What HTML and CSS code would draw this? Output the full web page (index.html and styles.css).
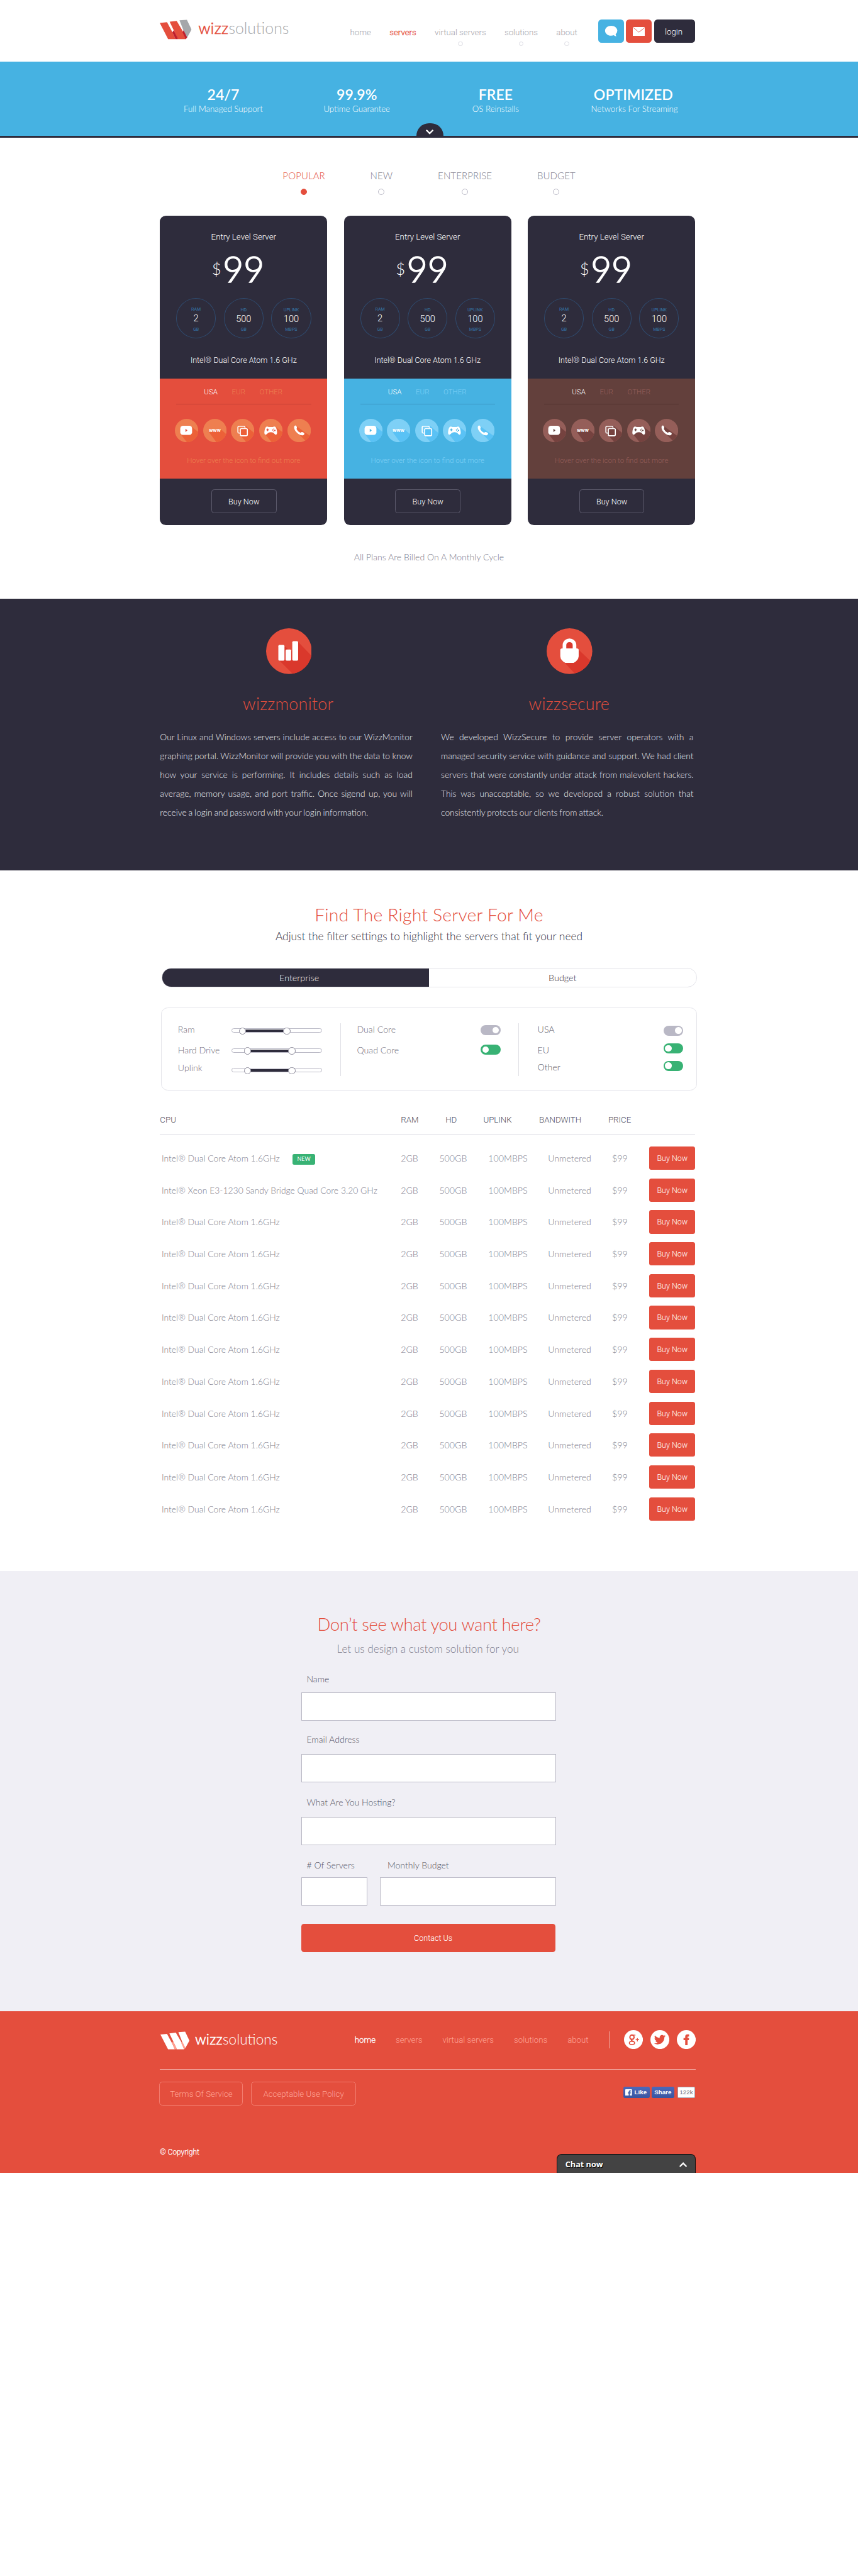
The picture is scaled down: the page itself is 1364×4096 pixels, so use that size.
FILE: index.html
```html
<!DOCTYPE html>
<html lang="en">
<head>
<meta charset="utf-8">
<title>wizzsolutions</title>
<link rel="stylesheet" href="styles.css">
</head>
<body>
<svg class="defs" width="0" height="0" aria-hidden="true">
  <defs>
    <clipPath id="disc"><circle cx="21" cy="21" r="21"/></clipPath>
    <symbol id="i-video" viewBox="0 0 42 42">
      <circle class="disc" cx="21" cy="21" r="21"/>
      <path class="shade" clip-path="url(#disc)" d="M10 27L24 45H45V26L30 14Z"/>
      <rect x="9.7" y="12.5" width="21.2" height="16.4" rx="5" fill="#fff"/>
      <path class="cut" d="M19 17.8L22.6 20.7L19 23.6Z"/>
    </symbol>
    <symbol id="i-www" viewBox="0 0 42 42">
      <circle class="disc" cx="21" cy="21" r="21"/>
      <path class="shade" clip-path="url(#disc)" d="M10.500 24L26 45H45V31L31 18Z"/>
      <text x="21" y="24" text-anchor="middle" class="www">www</text>
    </symbol>
    <symbol id="i-copy" viewBox="0 0 42 42">
      <circle class="disc" cx="21" cy="21" r="21"/>
      <path class="shade" clip-path="url(#disc)" d="M12.500 25L31 45H45V28L27 13Z"/>
      <path class="back" d="M16.500 17H30V31H16.500Z"/>
      <path d="M16 25.500H14.400Q12.600 25.500 12.600 23.700V15Q12.600 13.200 14.400 13.200H23.500Q25.300 13.200 25.300 15V16.500" fill="none" stroke="#fff" stroke-width="1.800"/>
      <rect x="17" y="17.500" width="12.600" height="12.800" rx="2" fill="none" stroke="#fff" stroke-width="1.900"/>
    </symbol>
    <symbol id="i-game" viewBox="0 0 42 42">
      <circle class="disc" cx="21" cy="21" r="21"/>
      <path class="shade" clip-path="url(#disc)" d="M11 28L25 45H45V26L30 15Z"/>
      <path d="M13 14Q15 13.500 17 14.600H24.500Q26.500 13.500 28.500 14Q31.800 16 32.200 25.500Q32 28.500 29.500 28.400Q28 28.200 25.600 24.800Q21 23.200 16.400 24.800Q13.600 28.200 12 28.400Q9.400 28.500 9.300 25.500Q9.700 16 13 14Z" fill="#fff"/>
      <path class="cut" d="M13 18.900H14.400V17.500H16V18.900H17.400V20.500H16V21.900H14.400V20.500H13Z"/>
      <circle class="cut" cx="24.500" cy="20" r="1.200"/><circle class="cut" cx="28.200" cy="20.800" r="1.200"/><circle class="cut" cx="26.400" cy="18" r=".8"/><circle class="cut" cx="26.200" cy="22.800" r=".8"/>
    </symbol>
    <symbol id="i-phone" viewBox="0 0 42 42">
      <circle class="disc" cx="21" cy="21" r="21"/>
      <path class="shade" clip-path="url(#disc)" d="M17 24L34 41L45 34L31 24L16 13Z"/>
      <path d="M12 14Q13 11.300 15.200 12Q17.500 14 17 16.500Q16 17.800 16.600 18.800Q18.500 22.500 22.500 24.600Q23.600 25 24.800 23.900Q27.500 23 30.300 25.800Q30.900 28 28.500 29.200Q24.800 30.500 19.500 27Q11 20.500 12 14Z" fill="#fff"/>
    </symbol>
    <symbol id="mark" viewBox="21 47 171 107">
      <path class="m-a" d="M21 65L60 61L90 117L106 152H66Z"/>
      <path class="m-a" d="M74 58L112 54L146 112L161 152H118L96 104Z"/>
      <path class="m-c" d="M127 51L167 48L192 101L167 146L148 104Z"/>
      <path class="m-b" d="M96 104L117 146L118 152H106L89 116Z"/>
      <path class="m-b" d="M149 104L168 143L161 153L144 116Z"/>
    </symbol>
  </defs>
</svg>

<header class="top">
  <div class="wrap top-row">
    <a class="logo"><svg class="mark" width="57" height="36"><use href="#mark"/></svg><span class="word"><b>wizz</b>solutions</span></a>
    <nav class="nav">
      <a>home</a><a class="on">servers</a><a class="sub">virtual servers</a><a class="sub">solutions</a><a class="sub">about</a>
    </nav>
    <div class="actions">
      <a class="btn-sq chat"><svg width="24" height="22" viewBox="0 0 24 22"><path d="M12 1C5.900 1 1 4.800 1 9.900S5.900 19 12 19Q14.500 19 16.500 18.200Q19 20 21.500 20Q20 18.500 20 16Q23 13.500 23 9.900C23 4.800 18 1 12 1Z" fill="#fff"/></svg></a>
      <a class="btn-sq mail"><svg width="22" height="16" viewBox="0 0 22 16"><path d="M0 0H22V16H0Z" fill="#fff"/><path d="M0 .3L11 9.300L22 .3" fill="none" stroke="#e44e3d" stroke-width="1"/></svg></a>
      <a class="login">login</a>
    </div>
  </div>
</header>

<section class="stats">
  <div class="stats-row">
    <div><strong>24/7</strong><span>Full Managed Support</span></div>
    <div><strong>99.9%</strong><span>Uptime Guarantee</span></div>
    <div><strong>FREE</strong><span>OS Reinstalls</span></div>
    <div><strong>OPTIMIZED</strong><span class="wide">Networks For Streaming</span></div>
  </div>
  <a class="pull"><svg width="16" height="11" viewBox="0 0 16 11"><path d="M2 2L8 8L14 2" fill="none" stroke="#fff" stroke-width="2.600"/></svg></a>
</section>

<section class="plans">
  <nav class="tabs"><a class="on">POPULAR</a><a>NEW</a><a>ENTERPRISE</a><a>BUDGET</a></nav>
  <div class="wrap cards">
    <article class="card red">
      <h3>Entry Level Server</h3>
      <p class="price"><sup>$</sup>99</p>
      <div class="specs">
        <div><i>RAM</i><b>2</b><i>GB</i></div><div class="lo"><i>HD</i><b>500</b><i>GB</i></div><div class="lo"><i>UPLINK</i><b>100</b><i>MBPS</i></div>
      </div>
      <p class="cpu">Intel® Dual Core Atom 1.6 GHz</p>
      <div class="band">
        <div class="regions"><a class="on">USA</a><a>EUR</a><a>OTHER</a></div>
        <div class="icons"><svg><use href="#i-video"/></svg><svg><use href="#i-www"/></svg><svg><use href="#i-copy"/></svg><svg><use href="#i-game"/></svg><svg><use href="#i-phone"/></svg></div>
        <p class="hint">Hover over the icon to find out more</p>
      </div>
      <a class="buy">Buy Now</a>
    </article>
    <article class="card blue">
      <h3>Entry Level Server</h3>
      <p class="price"><sup>$</sup>99</p>
      <div class="specs">
        <div><i>RAM</i><b>2</b><i>GB</i></div><div class="lo"><i>HD</i><b>500</b><i>GB</i></div><div class="lo"><i>UPLINK</i><b>100</b><i>MBPS</i></div>
      </div>
      <p class="cpu">Intel® Dual Core Atom 1.6 GHz</p>
      <div class="band">
        <div class="regions"><a class="on">USA</a><a>EUR</a><a>OTHER</a></div>
        <div class="icons"><svg><use href="#i-video"/></svg><svg><use href="#i-www"/></svg><svg><use href="#i-copy"/></svg><svg><use href="#i-game"/></svg><svg><use href="#i-phone"/></svg></div>
        <p class="hint">Hover over the icon to find out more</p>
      </div>
      <a class="buy">Buy Now</a>
    </article>
    <article class="card brown">
      <h3>Entry Level Server</h3>
      <p class="price"><sup>$</sup>99</p>
      <div class="specs">
        <div><i>RAM</i><b>2</b><i>GB</i></div><div class="lo"><i>HD</i><b>500</b><i>GB</i></div><div class="lo"><i>UPLINK</i><b>100</b><i>MBPS</i></div>
      </div>
      <p class="cpu">Intel® Dual Core Atom 1.6 GHz</p>
      <div class="band">
        <div class="regions"><a class="on">USA</a><a>EUR</a><a>OTHER</a></div>
        <div class="icons"><svg><use href="#i-video"/></svg><svg><use href="#i-www"/></svg><svg><use href="#i-copy"/></svg><svg><use href="#i-game"/></svg><svg><use href="#i-phone"/></svg></div>
        <p class="hint">Hover over the icon to find out more</p>
      </div>
      <a class="buy">Buy Now</a>
    </article>
  </div>
  <p class="cycle">All Plans Are Billed On A Monthly Cycle</p>
</section>

<section class="features">
  <div class="wrap feat-row">
    <div class="feat one">
      <svg width="82" height="82" viewBox="0 0 82 82"><clipPath id="big"><circle cx="41" cy="41" r="41"/></clipPath><circle cx="41" cy="41" r="41" fill="#e44e3d"/><path clip-path="url(#big)" d="M23 57L50 84H84V52L57 24L45 42L32 31Z" fill="#da382c"/><rect x="22" y="30" width="11" height="28" rx="2" fill="#fff"/><rect x="35" y="38" width="10" height="20" rx="2" fill="#fff"/><rect x="47" y="23" width="10.500" height="35" rx="2" fill="#fff"/></svg>
      <h2>wizzmonitor</h2>
      <p>Our Linux and Windows servers include access to our WizzMonitor graphing portal. WizzMonitor will provide you with the data to know how your service is performing. It includes details such as load average, memory usage, and port traffic. Once sigend up, you will receive a login and password with your login information.</p>
    </div>
    <div class="feat two">
      <svg width="82" height="82" viewBox="0 0 82 82"><circle cx="41" cy="41" r="41" fill="#e44e3d"/><path clip-path="url(#big)" d="M28 57L53 84L84 64L57 38Z" fill="#da382c"/><path d="M32 38V30A9 8.500 0 0 1 50 30V38" fill="#da382c" stroke="#fff" stroke-width="6.500"/><path d="M28 36H54Q57.500 36 57.500 39V50Q57 58 48.500 62H33.500Q25 58 24.500 50V39Q24.500 36 28 36Z" fill="#fff"/></svg>
      <h2>wizzsecure</h2>
      <p>We developed WizzSecure to provide server operators with a managed security service with guidance and support. We had client servers that were constantly under attack from malevolent hackers. This was unacceptable, so we developed a robust solution that consistently protects our clients from attack.</p>
    </div>
  </div>
</section>

<section class="finder">
  <h2>Find The Right Server For Me</h2>
  <p class="lead">Adjust the filter settings to highlight the servers that fit your need</p>
  <div class="segment"><a class="on">Enterprise</a><a>Budget</a></div>
  <div class="filters">
    <div class="col sliders">
      <div><span>Ram</span><div class="track s1"><i></i></div></div>
      <div><span>Hard Drive</span><div class="track"><i></i></div></div>
      <div><span>Uplink</span><div class="track"><i></i></div></div>
    </div>
    <div class="col cores">
      <div><span>Dual Core</span><i class="tg off"></i></div>
      <div><span>Quad Core</span><i class="tg"></i></div>
    </div>
    <div class="col geo">
      <div><span>USA</span><i class="tg off"></i></div>
      <div><span>EU</span><i class="tg"></i></div>
      <div><span>Other</span><i class="tg"></i></div>
    </div>
  </div>
  <div class="wrap list">
    <div class="head"><span>CPU</span><span>RAM</span><span>HD</span><span>UPLINK</span><span>BANDWITH</span><span>PRICE</span></div>
    <div class="row"><span>Intel® Dual Core Atom 1.6GHz <em>NEW</em></span><span>2GB</span><span>500GB</span><span>100MBPS</span><span>Unmetered</span><span>$99</span><a>Buy Now</a></div>
    <div class="row"><span>Intel® Xeon E3-1230 Sandy Bridge Quad Core 3.20 GHz</span><span>2GB</span><span>500GB</span><span>100MBPS</span><span>Unmetered</span><span>$99</span><a>Buy Now</a></div>
    <div class="row"><span>Intel® Dual Core Atom 1.6GHz</span><span>2GB</span><span>500GB</span><span>100MBPS</span><span>Unmetered</span><span>$99</span><a>Buy Now</a></div>
    <div class="row"><span>Intel® Dual Core Atom 1.6GHz</span><span>2GB</span><span>500GB</span><span>100MBPS</span><span>Unmetered</span><span>$99</span><a>Buy Now</a></div>
    <div class="row"><span>Intel® Dual Core Atom 1.6GHz</span><span>2GB</span><span>500GB</span><span>100MBPS</span><span>Unmetered</span><span>$99</span><a>Buy Now</a></div>
    <div class="row"><span>Intel® Dual Core Atom 1.6GHz</span><span>2GB</span><span>500GB</span><span>100MBPS</span><span>Unmetered</span><span>$99</span><a>Buy Now</a></div>
    <div class="row"><span>Intel® Dual Core Atom 1.6GHz</span><span>2GB</span><span>500GB</span><span>100MBPS</span><span>Unmetered</span><span>$99</span><a>Buy Now</a></div>
    <div class="row"><span>Intel® Dual Core Atom 1.6GHz</span><span>2GB</span><span>500GB</span><span>100MBPS</span><span>Unmetered</span><span>$99</span><a>Buy Now</a></div>
    <div class="row"><span>Intel® Dual Core Atom 1.6GHz</span><span>2GB</span><span>500GB</span><span>100MBPS</span><span>Unmetered</span><span>$99</span><a>Buy Now</a></div>
    <div class="row"><span>Intel® Dual Core Atom 1.6GHz</span><span>2GB</span><span>500GB</span><span>100MBPS</span><span>Unmetered</span><span>$99</span><a>Buy Now</a></div>
    <div class="row"><span>Intel® Dual Core Atom 1.6GHz</span><span>2GB</span><span>500GB</span><span>100MBPS</span><span>Unmetered</span><span>$99</span><a>Buy Now</a></div>
    <div class="row"><span>Intel® Dual Core Atom 1.6GHz</span><span>2GB</span><span>500GB</span><span>100MBPS</span><span>Unmetered</span><span>$99</span><a>Buy Now</a></div>
  </div>
</section>

<section class="contact">
  <h2>Don’t see what you want here?</h2>
  <p class="lead">Let us design a custom solution for you</p>
  <div class="form">
    <label>Name</label><div class="box b1"></div>
    <label>Email Address</label><div class="box b2"></div>
    <label>What Are You Hosting?</label><div class="box b3"></div>
    <div class="pair">
      <div class="few"><label># Of Servers</label><div class="box"></div></div>
      <div class="budget"><label>Monthly Budget</label><div class="box"></div></div>
    </div>
    <a class="send">Contact Us</a>
  </div>
</section>

<footer class="foot">
  <div class="foot-row">
    <a class="logo"><svg class="mark" width="52" height="33"><use href="#mark"/></svg><span class="word"><b>wizz</b>solutions</span></a>
    <nav class="nav"><a class="on">home</a><a>servers</a><a>virtual servers</a><a>solutions</a><a>about</a></nav>
    <div class="social">
      <svg width="34" height="34" viewBox="0 0 34 34"><circle cx="17" cy="17" r="17" fill="#fff"/><g fill="none" stroke="#e44e3d"><ellipse cx="14.300" cy="12.700" rx="3.800" ry="3.900" stroke-width="2.200"/><path d="M14 9H20.500" stroke-width="1.500"/><path d="M14 16.500Q12 18 14.500 19.300L17 20.500" stroke-width="2"/><ellipse cx="14.300" cy="23" rx="4.700" ry="3.200" stroke-width="2"/><path d="M24 14.300V20.300M21 17.300H27" stroke-width="1.600"/></g></svg>
      <svg width="34" height="34" viewBox="0 0 34 34"><circle cx="17" cy="17" r="17" fill="#fff"/><path transform="translate(6.500 6.800) scale(.86)" d="M24 4.600c-.9.400-1.800.7-2.800.8 1-.6 1.800-1.600 2.200-2.700-1 .6-2 1-3.100 1.200-.9-1-2.200-1.600-3.600-1.600-3.200 0-5.600 3-4.800 6.100-4.100-.2-7.700-2.200-10.100-5.100C.5 5.500 1.100 8.400 3.300 9.800c-.8 0-1.600-.2-2.200-.6-.1 2.300 1.600 4.400 3.900 4.900-.7.200-1.500.2-2.200.1.600 2 2.400 3.400 4.600 3.400C5.300 19.300 2.700 20 0 19.700c2.200 1.400 4.800 2.200 7.500 2.200 9.100 0 14.300-7.700 14-14.600 1-.7 1.800-1.600 2.500-2.700z" fill="#e44e3d"/></svg>
      <svg width="34" height="34" viewBox="0 0 34 34"><circle cx="17" cy="17" r="17" fill="#fff"/><path d="M15 27V18H12V14H15V11.500Q15 7.500 19 7.500H22V11.500H20.300Q19.300 11.500 19.300 12.700V14H22L21.600 18H19.300V27Z" fill="#e44e3d"/></svg>
    </div>
  </div>
  <div class="foot-mid">
    <a class="ghost g1">Terms Of Service</a><a class="ghost g2">Acceptable Use Policy</a>
    <div class="fb"><a class="like"><svg width="12" height="12" viewBox="0 0 12 12"><rect width="12" height="12" rx="1" fill="#fff"/><path d="M6.200 12V7.500H4.700V5.600H6.200V4.300Q6.200 2 8.500 2H10V3.900H9Q8.300 3.900 8.300 4.600V5.600H10L9.700 7.500H8.300V12Z" fill="#4263ab"/></svg>Like</a><a class="share">Share</a><span class="count">122k</span></div>
  </div>
  <div class="foot-end">
    <span class="copy">© Copyright</span>
    <a class="chatbar">Chat now<svg width="16" height="11" viewBox="0 0 16 11"><path d="M2 9L8 3L14 9" fill="none" stroke="#fff" stroke-width="2.600"/></svg></a>
  </div>
</footer>
</body>
</html>
```
FILE: styles.css
```css
* { box-sizing: border-box; }
html { background: #fff; }
body {
  --mark-a: #e44e3d;
  --mark-b: #bf1e2e;
  --mark-c: #a5a7aa;
  margin: 0;
  width: 1539px;
  height: 4620px;
  zoom: 0.8863;
  font: 300 15px/20px Roboto, sans-serif;
  color: #2e2c3c;
}
html { overflow: hidden; }
h2, h3, p { margin: 0; font-weight: 300; }
i, em { font-style: normal; }
svg { display: block; flex: none; }
.defs { position: absolute; }
a, span, label { white-space: nowrap; }
.wrap { width: 960px; margin-left: 287px; }

/* header */
.top { height: 111px; padding-top: 35px; }
.top-row { display: flex; height: 50px; }
.logo { display: flex; width: 341px; }
.m-a { fill: var(--mark-a); }
.m-b { fill: var(--mark-b); }
.m-c { fill: var(--mark-c); }
.word { font: 300 28px/32px Lato, sans-serif; color: #a5a7aa; margin-left: 12px; }
.word b { font-weight: 300; letter-spacing: .4px; -webkit-text-stroke: .8px currentColor; color: #e44e3d; }
.nav { display: flex; gap: 33px; padding-top: 13px; color: #a3a2ab; }
.nav a { display: flex; flex-direction: column; align-items: center; }
.nav .on { color: #e44e3d; -webkit-text-stroke: .35px currentColor; }
.nav .sub::after { content: ""; width: 6px; height: 6px; margin-top: 6px; border: 1px solid #dcdce3; border-radius: 50%; }
.actions { display: flex; gap: 4px; margin-left: auto; }
.btn-sq, .login { height: 42px; border-radius: 6px; display: flex; align-items: center; justify-content: center; color: #fff; }
.btn-sq { width: 46px; }
.chat { background: #46b2e2; }
.mail { background: #e44e3d; }
.login { width: 74px; background: #2e2c3c; padding: 2px 3px 0 0; }

/* stats */
.stats { height: 136px; background: #46b2e2; border-bottom: 4px solid #2e2c3c; position: relative; padding-top: 41px; color: #fff; }
.stats-row { display: grid; grid-template-columns: 239px 240px 258px 236px; margin-left: 281px; text-align: center; font-family: Lato, sans-serif; }
.stats-row div { display: flex; flex-direction: column; }
.stats strong { font-size: 26px; line-height: 34px; font-weight: 600; }
.stats span { font-size: 15px; line-height: 19px; }
.stats .wide { padding-left: 4px; }
.pull { position: absolute; left: 747px; bottom: 0; width: 48px; height: 22px; background: #2e2c3c; border-radius: 24px 24px 0 0; display: flex; justify-content: center; padding-top: 10px; }

/* plans */
.plans { height: 827px; }
.tabs { display: flex; gap: 81px; margin-left: 507px; padding-top: 58px; height: 140px; font: 300 17px/22px Lato, sans-serif; letter-spacing: .1px; color: #7d7b8b; }
.tabs a { display: flex; flex-direction: column; align-items: center; }
.tabs a::after { content: ""; width: 9px; height: 9px; margin-top: 11px; border: 1px solid #b9b8c5; border-radius: 50%; }
.tabs .on { color: #e44e3d; }
.tabs .on::after { background: #e44e3d; border-color: #e44e3d; }
.cards { display: flex; gap: 30px; }
.card { width: 300px; height: 555px; border-radius: 11px; background: #2e2c3c; color: #fff; text-align: center; padding-top: 28px; }
.card h3 { font-size: 15px; line-height: 20px; }
.price { display: flex; justify-content: center; font: 300 64px/64px Lato, sans-serif; -webkit-text-stroke: 1.700px #fff; margin-top: 15px; padding-right: 20px; gap: 3px; }
.price sup { font-size: 29px; line-height: 64px; -webkit-text-stroke: 0; }
.specs { display: flex; gap: 14px; margin: 21px 29px 0; }
.specs div { width: 71.500px; height: 72px; border: 1.500px solid #2f4a6d; border-radius: 50%; display: flex; flex-direction: column; align-items: center; padding-top: 14px; }
.specs .lo { padding-top: 16px; }
.specs i { font: 400 8px/10px Roboto, sans-serif; color: #3575a8; }
.specs b { font-size: 16.500px; line-height: 20px; font-weight: 300; margin: 2px 0 5px; }
.specs .lo b { margin: 1px 0 3.500px; }
.cpu { margin-top: 29px; font-size: 14.100px; line-height: 20px; }
.band { margin-top: 23px; height: 180px; background: var(--bg); color: var(--soft); }
.red { --bg: #e44e3d; --soft: #ee7f50; --line: #c33f35; --shade: #ec6138; }
.blue { --bg: #46b2e2; --soft: #7ed0f6; --line: #3b94c0; --shade: #5ac2f5; }
.brown { --bg: #63403c; --soft: #955e59; --line: #4f302d; --shade: #75423f; }
.regions { display: flex; gap: 25.500px; padding: 15px 0 0 50px; margin: 0 29px; height: 47px; border-bottom: 1px solid var(--line); font-size: 13px; line-height: 20px; }
.regions .on { color: #fff; }
.icons { display: flex; gap: 8.300px; margin: 25px 0 0 27px; }
.icons svg { width: 42px; height: 42px; }
.disc { fill: var(--soft); }
.shade, .back { fill: var(--shade); }
.cut { fill: var(--bg); }
.www { font: 700 9.500px Roboto, sans-serif; fill: #fff; }
.hint { margin-top: 24px; font-size: 13px; line-height: 20px; }
.buy { display: flex; align-items: center; justify-content: center; width: 117px; height: 43px; margin: 19px 0 0 92px; border: 1px solid #5b596b; border-radius: 5px; font-size: 14.300px; padding-top: 1px; }
.cycle { margin: 46px 0 0 635px; font: 300 15.900px/22px Lato, sans-serif; color: #7d7b8b; }

/* features */
.features { height: 488px; background: #2e2c3c; padding-top: 53px; }
.feat-row { display: flex; gap: 51px; }
.feat { width: 453px; display: flex; flex-direction: column; align-items: center; }
.feat svg { margin-left: 9px; }
.feat h2 { font: 300 30.300px/36px Lato, sans-serif; letter-spacing: .3px; color: #e44e3d; margin: 36px 0 0 7px; }
.feat p { width: 453px; font: 300 15.600px/34px Lato, sans-serif; word-spacing: -1px; color: #ececf2; text-align: justify; margin-top: 24px; }

/* finder */
.finder { height: 1257px; }
.finder h2, .contact h2 { font: 300 31px/38px Lato, sans-serif; color: #e44e3d; text-align: center; }
.finder h2 { padding-top: 61px; font-size: 32px; letter-spacing: .2px; }
.lead { font: 300 19.600px/24px Lato, sans-serif; text-align: center; margin-top: 7px; }
.segment { display: flex; width: 960px; height: 35px; margin: 44px 0 0 290px; border: 1px solid #e4e4ea; border-radius: 17px; overflow: hidden; font: 300 16.200px/33px Lato, sans-serif; text-align: center; }
.segment a { flex: 1; }
.segment .on { flex: none; width: 478px; background: #2e2c3c; color: #fff; padding-left: 13px; }
.filters { display: flex; width: 961px; height: 149px; margin: 37px 0 0 289px; border: 1px solid #e4e4ea; border-radius: 12px; padding: 27px 23px 0 29px; font: 300 16px/20px Lato, sans-serif; color: #6f6d7d; }
.col { height: 94px; padding-top: 1px; }
.col + .col { border-left: 1px solid #e0e0e6; padding-left: 29px; }
.col > div { display: flex; justify-content: space-between; height: 37px; }
.sliders { width: 291px; }
.sliders > div { padding-right: 33px; }
.col.sliders > div + div { height: 32px; }
.track { position: relative; width: 162px; height: 8px; margin-top: 8px; border: 1px solid #b9b8c5; border-radius: 4px; }
.sliders > div:nth-child(2) .track { margin-top: 7px; }
.sliders > div:nth-child(3) .track { margin-top: 10px; }
.track::before, .track::after, .track i { content: ""; position: absolute; }
.track i { left: 27px; width: 80px; top: 1px; height: 4px; background: #2e2c3c; }
.track::before, .track::after { z-index: 1; width: 11px; height: 11px; top: -3px; left: 21px; border: 1px solid #8b8999; background: #fff; border-radius: 50%; }
.track::after { left: 101px; }
.s1 i { left: 18px; } .s1::before { left: 12px; } .s1::after { left: 92px; }
.tg { width: 36px; height: 18px; border-radius: 9px; background: #38b274; padding: 3px; display: flex; }
.tg::before { content: ""; width: 12px; height: 12px; border-radius: 50%; background: #fff; }
.tg.off { background: #b9b8c5; justify-content: flex-end; margin-top: 2px; }
.cores { width: 320px; padding-right: 32px; }
.geo { flex: 1; color: #565464; }
.col.geo { padding-left: 33px; }
.col.geo > div + div { height: 31px; }
.geo .tg { margin-top: -2px; }
.geo .tg.off { margin-top: 3px; }
.list { padding-top: 42px; }
.head, .row { display: grid; grid-template-columns: 432px 69px 88px 107px 115px 67px 82px; }
.head { grid-template-columns: 432px 80px 68px 100px 124px 80px; height: 37px; border-bottom: 1px solid #e0e0e6; color: #4f4d5d; line-height: 20px; font-size: 15px; margin-bottom: 21px; }
.row { font: 300 16px/42px Lato, sans-serif; color: #7d7b8b; margin-bottom: 15.200px; }
.row span:first-child { padding-left: 3px; font-size: 15.700px; }
.row em { display: inline-block; width: 40px; height: 19px; margin-left: 19px; background: #38b274; color: #fff; border-radius: 3px; font-size: 10px; font-weight: 400; line-height: 19px; text-align: center; vertical-align: 1.500px; }
.row a { height: 42px; background: #e44e3d; border-radius: 4px; color: #fff; font: 300 14.100px/43px Roboto, sans-serif; text-align: center; }

/* contact */
.contact { height: 789px; background: #f0eff5; padding-top: 76px; }
.contact h2 { letter-spacing: -.45px; }
.contact .lead { color: #7d7b8b; font-size: 19.400px; margin-top: 13px; padding-right: 4px; }
.form { width: 456px; margin: 32px 0 0 541px; color: #565464; }
.form label { display: block; font: 300 15.900px/20px Lato, sans-serif; padding-left: 9px; }
.box { height: 51px; border: 1px solid #b9b8c5; background: #fff; }
.form .b1 { margin: 14px 0 24px; }
.form .b2 { margin: 16px 0 26px; }
.form .b3 { margin: 16px 0 26px; }
.pair { display: flex; gap: 23px; }
.few { width: 118px; }
.budget { flex: 1; }
.budget label { padding-left: 13px; }
.pair .box { margin-top: 11px; }
.send { display: block; height: 50px; width: 455px; margin-top: 33px; background: #e44e3d; border-radius: 5px; color: #fff; text-align: center; font-size: 14.200px; line-height: 51px; padding-left: 17px; }

/* footer */
.foot { --mark-a: #fff; --mark-b: #ff9f90; --mark-c: #fff; height: 290px; background: #e44e3d; color: #fff; padding-top: 34px; }
.foot-row { display: flex; width: 961px; height: 71px; margin-left: 287px; border-bottom: 1px solid #f0a69e; }
.foot .logo { width: 349px; padding: 2px 0 0 1px; }
.foot .word { font-size: 25.500px; line-height: 30px; color: #fff; margin-left: 10px; }
.foot .word b { color: #fff; }
.foot .nav { gap: 36px; padding-top: 8px; color: #ffa597; }
.foot .nav .on { color: #fff; }
.social { display: flex; gap: 13.500px; margin-left: auto; }
.social::before { content: ""; width: 1px; height: 31px; margin: 2px 12px 0 0; background: #f0a69e; }
.foot-mid { display: flex; width: 961px; margin: 22px 0 0 286px; }
.ghost { height: 43px; border: 1px solid #f37d6f; border-radius: 6px; color: #ffa597; text-align: center; line-height: 42px; font-size: 15px; margin-right: 14px; }
.g1 { width: 150px; } .g2 { width: 189px; }
.fb { display: flex; margin: 9px 0 0 auto; font: 700 11px/20px "Liberation Sans", sans-serif; }
.like, .share { height: 20px; background: linear-gradient(#4c69ba, #3b55a0); border-radius: 3px; margin-right: 4px; text-align: center; }
.like { width: 47px; display: flex; align-items: center; gap: 4px; padding-left: 4px; }
.share { width: 40px; margin-right: 6px; }
.count { width: 32px; height: 20px; border: 1px solid #9aa0b0; border-radius: 2px; background: #fff; color: #6a7180; font-weight: 400; line-height: 18px; text-align: center; }
.foot-end { display: flex; justify-content: space-between; align-items: flex-end; width: 961px; height: 120px; margin-left: 287px; }
.copy { font-size: 13.400px; -webkit-text-stroke: .25px #fff; line-height: 20px; margin-bottom: 26px; }
.chatbar { width: 250px; height: 33px; background: #434343; border: 1px solid #111; border-bottom: 0; border-radius: 9px 9px 0 0; font: 700 14.300px/32px "Open Sans", sans-serif; display: flex; justify-content: space-between; align-items: center; padding: 2px 14px 0 15px; text-shadow: 1px 1px 1px #000; }
```
